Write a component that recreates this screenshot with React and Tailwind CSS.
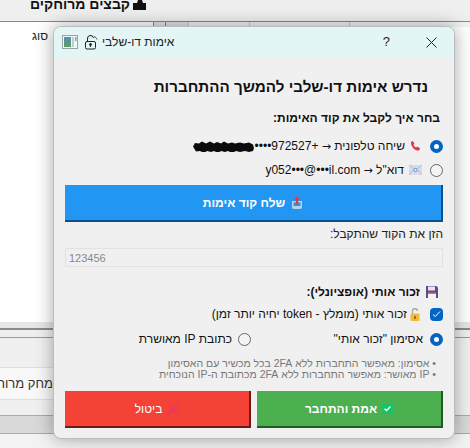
const font = { fontFamily: '"Liberation Sans", Arial, sans-serif' };

const WindowIcon = () => (
  <svg width="16" height="14" viewBox="0 0 16 14">
    <rect x="0.5" y="0.5" width="15" height="13" fill="#f4f6f6" stroke="#9aa3a8" />
    <rect x="2" y="2" width="7" height="10" fill="#4f94a8" />
    <rect x="2" y="7" width="7" height="5" fill="#5d9a6d" />
    <rect x="10" y="2" width="2" height="10" fill="#b9cfd6" />
    <rect x="13" y="2" width="1.5" height="4" fill="#7fa5b5" />
  </svg>
);

const TitleLock = () => (
  <svg width="14" height="15" viewBox="0 0 14 15" fill="none" stroke="#222" strokeWidth="1">
    <path d="M3.5 6.5V4a3 3 0 0 1 6-1" />
    <path d="M10 1.5c1.5.5 2.5 1.5 3 3" strokeWidth="0.8" />
    <rect x="1.5" y="6.5" width="10" height="7.5" rx="1.5" />
    <circle cx="6.5" cy="9.5" r="1" fill="#222" />
    <path d="M6.5 10v2" />
  </svg>
);

const PhoneIcon = () => (
  <svg width="11" height="12" viewBox="0 0 12 12">
    <path d="M1 1.500 3 .5l2 3-1.200 1.200c.5 1.300 1.500 2.300 2.800 2.900L8 6.500l3 2-1 2.500C5.500 11.500 1 7 1 1.500Z" fill="#e8344e" />
  </svg>
);

const MailIcon = () => (
  <svg width="13" height="10" viewBox="0 0 13 10">
    <rect width="13" height="10" fill="#dcd9ea" />
    <path d="M0 0l6.500 5L13 0M0 10l4-5M13 10 9 5" stroke="#b3aed0" strokeWidth="0.8" fill="none" />
    <circle cx="6.500" cy="5" r="2.200" fill="#6cb2e8" />
    <circle cx="6.500" cy="5" r="0.900" fill="#e9f4fc" />
  </svg>
);

const SendIcon = () => (
  <svg width="12" height="13" viewBox="0 0 12 13">
    <path d="M1 5h10v6a2 2 0 0 1-2 2H3a2 2 0 0 1-2-2Z" fill="#b7d3e6" />
    <path d="M2.500 6.500h7V10h-7Z" fill="#3d8fc8" />
    <path d="M6 0 9 3.500H7.200V8H4.800V3.500H3Z" fill="#e8344e" />
  </svg>
);

const FloppyIcon = () => (
  <svg width="12" height="12" viewBox="0 0 12 12">
    <path d="M0 0h10.500L12 1.500V12H0Z" fill="#5e4d85" />
    <rect x="2" y="0.500" width="7" height="4" fill="#e8e3f0" />
    <rect x="2" y="6.500" width="8" height="5.500" fill="#e9627e" />
    <rect x="2" y="8" width="8" height="4" fill="#f4f1f7" />
  </svg>
);

const OpenLockIcon = () => (
  <svg width="11" height="13" viewBox="0 0 11 13" fill="none">
    <path d="M2.500 6V3.500a2.500 2.500 0 0 1 5-.5" stroke="#a8a8a8" strokeWidth="1.300" />
    <rect x="0.500" y="5.500" width="9" height="7.500" rx="1" fill="#f5b73d" />
    <rect x="4.300" y="8" width="1.500" height="3" fill="#8a5a10" />
  </svg>
);

const CheckBadge = () => (
  <svg width="11" height="11" viewBox="0 0 11 11" fill="none">
    <rect width="11" height="11" rx="1" fill="#16c466" />
    <path d="M2.500 5.700 4.500 7.500 8.500 3.500" stroke="#fff" strokeWidth="1.400" />
  </svg>
);

const CrossIcon = () => (
  <svg width="12" height="12" viewBox="0 0 12 12" fill="none">
    <path d="M1 1l10 10M11 1 1 11" stroke="#f0365f" strokeWidth="2.400" />
  </svg>
);

const Blob = () => (
  <svg width="62" height="11" viewBox="0 0 62 11" className="shrink-0">
    <path
      d="M0 5.500 2 2l4 .5L9 .5l4 2 4-2 4 2 3-1.500 4 1.500 3-2 4 2 4-1 3 1 5-1 4 1 5-1 4 2 1 3.500-1 3-4 1-4-1-5 1-4-1-4 2-4-2-3 1-4-1-3 2-4-2-3 1-4-1-3 2-4-2-4 .5Z"
      fill="#0c0c0c"
    />
  </svg>
);

const Arrow = () => <span className="font-['DejaVu_Sans'] text-[11px]">→</span>;

const Radio = ({ checked }) =>
  checked ? (
    <span className="flex h-[13px] w-[13px] shrink-0 items-center justify-center rounded-full bg-[#0563c1]">
      <span className="h-[5px] w-[5px] rounded-full bg-white" />
    </span>
  ) : (
    <span className="h-[13px] w-[13px] shrink-0 rounded-full border border-[#666] bg-[#f4f4f4]" />
  );

const App = () => (
  <div className="relative h-[448px] w-[470px] overflow-hidden bg-[#f0f0f0] text-[#111]" style={font}>
    {/* window behind the dialog */}
    <div className="flex h-full flex-col">
      <div className="h-[22px] shrink-0 overflow-hidden border-b border-[#888] bg-[#efefef]">
        <div dir="rtl" className="-mt-[4px] ml-[34px] flex w-[112px] items-center gap-[3px] text-[14px] font-bold leading-4">
          <svg width="13" height="11" viewBox="0 0 13 11" className="shrink-0">
            <path d="M0 4h4l1-3h4l1 3h3v7H0Z" fill="#111" />
          </svg>
          <span className="whitespace-nowrap">קבצים מרוחקים</span>
        </div>
      </div>
      <div className="flex h-[300px] shrink-0 bg-white">
        <div dir="rtl" className="h-full w-[153px] shrink-0 pr-[105px] pt-[5px] text-[12px] text-[#222]">
          סוג
        </div>
        <div className="h-[5px] w-[12px] shrink-0 border-l border-[#888] bg-[#e4e4e4]" />
        <div className="flex h-[5px] flex-1 border-l border-[#888] bg-[#f2f2f2]">
          <div className="w-[22px] bg-[#e2e2e2]" />
          <div className="w-[61px] border-l border-[#ccc]" />
          <div className="w-[100px] border-l border-[#ccc]" />
          <div className="flex-1 border-l border-[#ccc]" />
        </div>
      </div>
      <div className="h-[6px] shrink-0 bg-[#e6e6e6]" />
      <div className="h-[2px] shrink-0 bg-[#8a8a8a]" />
      <div className="h-[7px] shrink-0 bg-[#efefef]" />
      <div className="h-px shrink-0 bg-[#9a9a9a]" />
      <div className="h-[29px] shrink-0 bg-[#f0f0f0]" />
      <div dir="rtl" className="h-[33px] w-[53px] shrink-0 overflow-hidden border-y border-[#dedede] bg-[#f8f8f8]">
        <span className="block whitespace-nowrap text-[13px] leading-[31px] text-[#333]">מחק מרוחקים</span>
      </div>
      <div className="h-[15px] shrink-0 bg-[#f0f0f0]" />
      <div className="h-[19px] shrink-0 border-y border-[#aaa] bg-[#d9d9d9]" />
      <div className="flex-1 bg-[#f3f3f3]" />
    </div>

    {/* dialog */}
    <div className="absolute left-[53px] top-[26px] flex h-[413px] w-[402px] flex-col overflow-hidden rounded-lg border border-[#bdbdbd] bg-[#f0f0f0] shadow-[0_0_18px_rgba(0,0,0,0.35)]">
      <div className="flex h-[30px] shrink-0 items-center bg-[#e3f6f5] pl-2 pr-[16px]">
        <WindowIcon />
        <span className="ml-[6px]">
          <TitleLock />
        </span>
        <span dir="rtl" className="ml-1 text-[12px] text-[#222]">
          אימות דו-שלבי
        </span>
        <span className="ml-auto mr-[36px] text-[13px] text-[#222]">?</span>
        <svg width="11" height="11" viewBox="0 0 11 11" fill="none" stroke="#222" strokeWidth="1" className="mr-px">
          <path d="M.5.500l10 10M10.500.500l-10 10" />
        </svg>
      </div>

      <div dir="rtl" className="flex flex-1 flex-col px-[11px]">
        <h1 className="mr-[15px] mt-[21px] text-[15.200px] font-bold leading-[18px]">
          נדרש אימות דו-שלבי להמשך ההתחברות
        </h1>
        <p className="mr-[3px] mt-[15px] text-[12px] font-bold leading-[14px]">בחר איך לקבל את קוד האימות:</p>

        <div className="mt-[13px] flex h-[16px] items-center">
          <Radio checked />
          <span className="mr-[9px] flex">
            <PhoneIcon />
          </span>
          <span className="mr-[5px] whitespace-nowrap text-[12px]">
            שיחה טלפונית <Arrow /> +972527••••
          </span>
          <Blob />
        </div>
        <div className="mt-[8px] flex h-[16px] items-center">
          <Radio />
          <span className="mr-[8px] flex">
            <MailIcon />
          </span>
          <span className="mr-[5px] whitespace-nowrap text-[12px]">
            דוא"ל <Arrow /> y052•••@•••il.com
          </span>
        </div>

        <button className="mt-[7px] flex h-[37px] shrink-0 items-center justify-center gap-[6px] border-b-2 border-r-2 border-[#0d4f8c] bg-[#2196f3] text-[12px] font-bold text-white">
          <SendIcon />
          שלח קוד אימות
        </button>

        <label className="mt-[5px] text-[12px] leading-[14px] text-[#222]">הזן את הקוד שהתקבל:</label>
        <input
          dir="ltr"
          readOnly
          placeholder="123456"
          className="mt-[7px] h-[19px] border border-[#e2e2e2] bg-[#f0f0f0] px-[3px] text-[11px] outline-none placeholder:text-[#888]"
        />

        <div className="mr-[5px] mt-[18px] flex h-[14px] items-center gap-[6px]">
          <FloppyIcon />
          <span className="text-[12px] font-bold">זכור אותי (אופציונלי):</span>
        </div>

        <div className="mt-[8px] flex h-[14px] items-center">
          <span className="flex h-[13px] w-[13px] shrink-0 items-center justify-center rounded-sm bg-[#0563c1]">
            <svg width="9" height="8" viewBox="0 0 9 8" fill="none" stroke="#fff" strokeWidth="1">
              <path d="M1 4.500 3.300 6.500 8 1.500" />
            </svg>
          </span>
          <span className="mr-[9px] flex">
            <OpenLockIcon />
          </span>
          <span className="mr-[3px] whitespace-nowrap text-[12px]">זכור אותי (מומלץ - token יחיה יותר זמן)</span>
        </div>

        <div className="mt-[11px] flex h-[14px] items-center">
          <Radio checked />
          <span className="mr-[7px] w-[172px] shrink-0 text-[12px]">אסימון "זכור אותי"</span>
          <Radio />
          <span className="mr-[6px] text-[12px]">כתובת IP מאושרת</span>
        </div>

        <ul className="mr-[7px] mt-[12px] text-[10.500px] leading-[11px] text-[#777]">
          <li>• אסימון: מאפשר התחברות ללא 2FA בכל מכשיר עם האסימון</li>
          <li>• IP מאושר: מאפשר התחברות ללא 2FA מכתובת ה-IP הנוכחית</li>
        </ul>

        <div className="mt-[11px] flex gap-[6px]">
          <button className="flex h-[37px] w-[186px] items-center justify-center gap-[5px] border-b-2 border-r-2 border-[#1f5c23] bg-[#4caf50] text-[12px] font-bold text-white">
            <CheckBadge />
            אמת והתחבר
          </button>
          <button className="flex h-[37px] w-[186px] items-center justify-center gap-[5px] border-b-2 border-r-2 border-[#6d1a15] bg-[#f44336] text-[12px] text-white">
            <CrossIcon />
            ביטול
          </button>
        </div>
      </div>
    </div>
  </div>
);

export default App;
